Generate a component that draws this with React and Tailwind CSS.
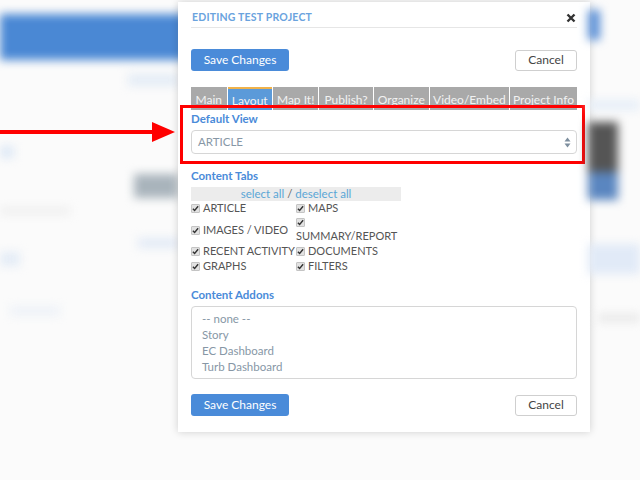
import React from 'react';

const tabs = [
    { label: 'Main', w: 'w-[36px]' },
    { label: 'Layout', w: 'w-[45px]', active: true },
    { label: 'Map It!', w: 'w-[46px]' },
    { label: 'Publish?', w: 'w-[54px]' },
    { label: 'Organize', w: 'w-[56px]' },
    { label: 'Video/Embed', w: 'w-[80px]' },
    { label: 'Project Info', w: 'w-[68px]' },
];

const Check = () => (
    <span className="inline-flex items-center justify-center w-[9px] h-[9px] mr-[3px] bg-[#e2e2e2] border border-[#c4c4c4] rounded-[1px] shrink-0">
        <svg width="7" height="7" viewBox="0 0 8 8"><path d="M1 4.2 L3 6.2 L7 1.5" stroke="#333" strokeWidth="1.6" fill="none" /></svg>
    </span>
);

const Item = ({ children }) => (
    <div className="flex items-center h-[15px] text-[11px] text-[#555] uppercase whitespace-nowrap"><Check />{children}</div>
);

const Buttons = () => (
    <div className="flex justify-between items-center">
        <button className="h-[22px] w-[98px] bg-[#4a8bd9] text-white text-[12px] rounded-[3px]">Save Changes</button>
        <button className="h-[21px] w-[62px] bg-white border border-[#cfcfcf] text-[#444] text-[12px] rounded-[3px]">Cancel</button>
    </div>
);

export default function App() {
    const labelClass = "text-[11.5px] font-bold text-[#4a8bd9] leading-[16px]";
    return (
        <div className="w-[640px] h-[480px] overflow-hidden bg-[#fbfbfb] flex relative" style={{ fontFamily: 'Lato, "Open Sans", sans-serif' }}>
            {/* blurred page behind the modal */}
            <div className="w-[178px] shrink-0 flex flex-col blur-[5px]">
                <div className="h-[14px]" />
                <div className="h-[46px] bg-[#4a88d4] mr-[-8px]" />
                <div className="h-[36px] mt-[10px] flex justify-end"><div className="w-[50px] h-[12px] bg-[#e4ecf6] mt-[4px]" /></div>
                <div className="h-[12px] w-[14px] bg-[#dde8f6] mt-[40px]" />
                <div className="flex justify-end mt-[16px]"><div className="w-[44px] h-[24px] bg-[#a9b4bc]" /></div>
                <div className="w-[70px] h-[6px] bg-[#ececec] mt-[10px]" />
                <div className="flex justify-end mt-[24px]"><div className="w-[40px] h-[10px] bg-[#e2eaf6]" /></div>
                <div className="w-[20px] h-[14px] bg-[#e4ecf6] mt-[4px]" />
                <div className="w-[50px] h-[10px] bg-[#eef2f8] mt-[40px] ml-[10px]" />
            </div>
            <div className="w-[412px] shrink-0 relative mt-[2px] h-[430px] bg-white shadow-[0_0_8px_rgba(0,0,0,0.18)] px-[13px] flex flex-col">
                <div className="flex items-center justify-between h-[26px] border-b border-[#e6e6e6] pt-[6px]">
                    <span className="text-[10.5px] font-bold text-[#6aa3de] tracking-[0.2px] pl-[1px]">EDITING TEST PROJECT</span>
                    <svg width="10" height="10" viewBox="0 0 10 10" className="mr-[1px]"><path d="M1.5 1.5 L8.5 8.5 M8.5 1.5 L1.5 8.5" stroke="#333" strokeWidth="2.4" /></svg>
                </div>
                <div className="mt-[21px]"><Buttons /></div>
                <div className="flex mt-[16px] h-[23px] gap-[1px]">
                    {tabs.map((t) => (
                        <div key={t.label} className={`${t.w} flex items-center justify-center text-[12px] text-[#f2f2f2] pt-[3px] ${t.active ? 'bg-[#5b9ad9] border-t-2 border-[#f0b24a]' : 'bg-[#a9a9a9]'}`}>{t.label}</div>
                    ))}
                </div>
                <div className={`${labelClass} mt-[1px]`}>Default View</div>
                <div className="mt-[3px] h-[24px] border border-[#d6d6d6] rounded-[4px] flex items-center justify-between pl-[6px] pr-[5px] text-[11.5px] text-[#8797a6]">
                    <span>ARTICLE</span>
                    <svg width="7" height="11" viewBox="0 0 7 11"><path d="M3.5 0.5 L6.5 4.5 L0.5 4.5 Z M0.5 6.5 L6.5 6.5 L3.5 10.5 Z" fill="#7d8e9e" /></svg>
                </div>
                <div className={`${labelClass} mt-[14px]`}>Content Tabs</div>
                <div className="w-[210px] mt-[3px] h-[14px] bg-[#ececec] text-center text-[11.5px] leading-[14px] text-[#5aa6d6]">select all <span className="text-[#666]">/</span> deselect all</div>
                <div className="grid grid-cols-[105px_105px]">
                    <Item>Article</Item>
                    <Item>Maps</Item>
                    <div className="h-[28px] flex items-center"><div className="flex items-center text-[11px] text-[#555] uppercase whitespace-nowrap"><Check />Images / Video</div></div>
                    <div className="h-[28px] flex flex-col text-[11px] text-[#555] uppercase leading-[15px]"><div className="flex items-center h-[12px]"><Check /></div><div className="whitespace-nowrap">Summary/Report</div></div>
                    <Item>Recent Activity</Item>
                    <Item>Documents</Item>
                    <Item>Graphs</Item>
                    <Item>Filters</Item>
                </div>
                <div className={`${labelClass} mt-[13px]`}>Content Addons</div>
                <div className="mt-[3px] h-[73px] border border-[#d6d6d6] rounded-[4px] overflow-hidden pl-[10px] pt-[4px] text-[11.5px] leading-[16px] text-[#8797a6]">
                    <div>-- none --</div>
                    <div>Story</div>
                    <div>EC Dashboard</div>
                    <div>Turb Dashboard</div>
                    <div>Well Dashboard</div>
                </div>
                <div className="mt-[15px]"><Buttons /></div>
                {/* red highlight annotation */}
                <div className="absolute left-[2px] top-[103px] w-[405px] h-[59px] border-[3px] border-[#ff0000]" />
            </div>
            <div className="flex-1 flex flex-col blur-[5px] ml-[-2px]">
                <div className="h-[10px]" />
                <div className="h-[30px] w-[12px] bg-[#5a8fd6]" />
                <div className="h-[10px] mt-[60px] bg-[#e6eef8]" />
                <div className="h-[50px] w-[30px] mt-[12px] bg-[#555]" />
                <div className="h-[28px] w-[30px] bg-[#5a86c0]" />
                <div className="h-[30px] mt-[44px] bg-[#e1eaf7]" />
                <div className="h-[8px] mt-[40px] ml-[10px] bg-[#e8e8e8]" />
            </div>
            {/* red arrow annotation */}
            <svg className="absolute left-0 top-[120px]" width="180" height="24" viewBox="0 0 180 24">
                <path d="M0 12 L156 12" stroke="#ff0000" strokeWidth="4" />
                <path d="M152 2 L175 12 L152 22 Z" fill="#ff0000" />
            </svg>
        </div>
    );
}
